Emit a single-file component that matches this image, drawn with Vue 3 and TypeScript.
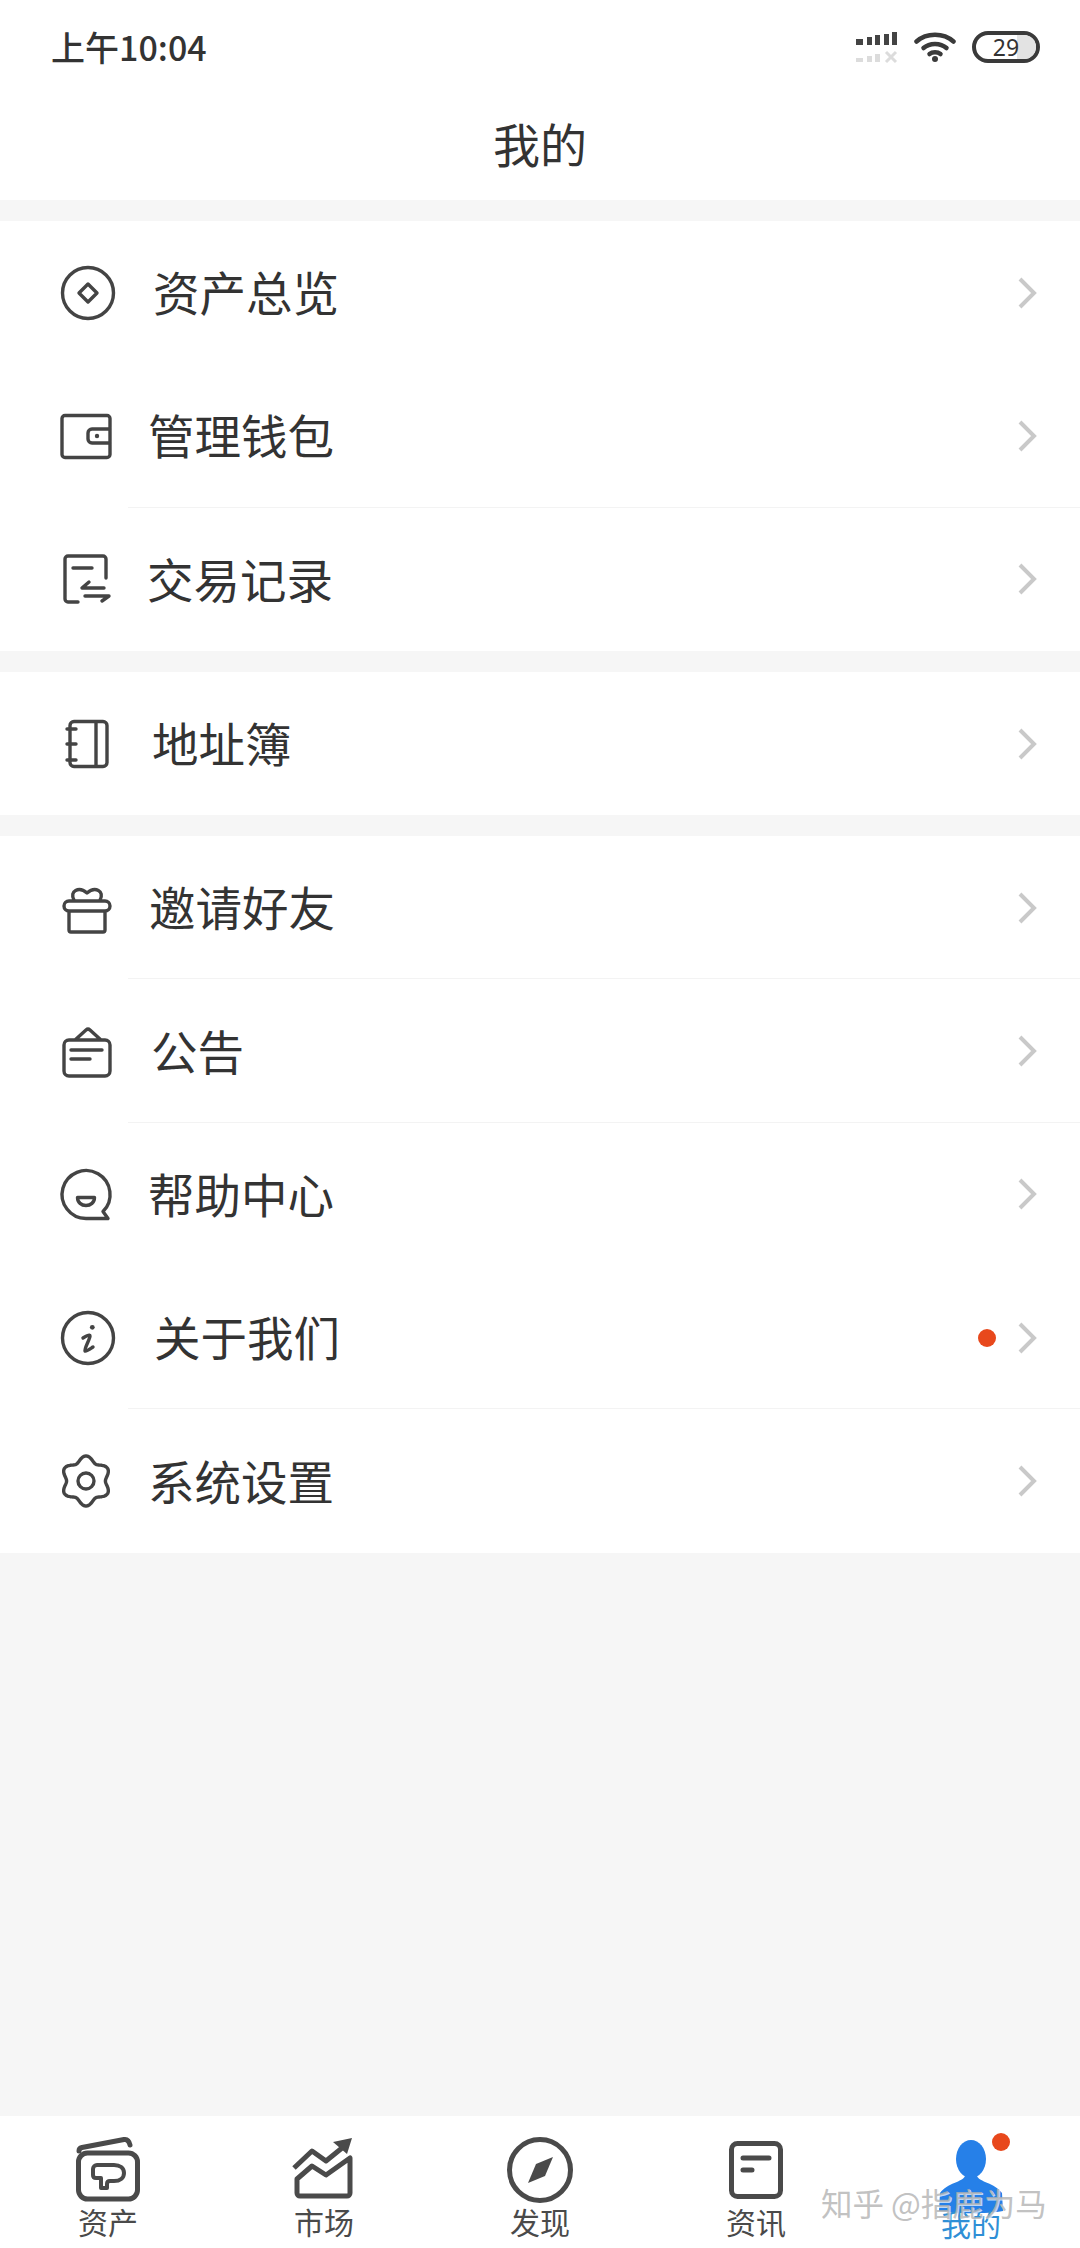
<script setup lang="ts">
interface Row {
  label: string
  d: string
  solid?: string
  gap: number
  line?: boolean
  dot?: boolean
}

const circle = (cx: number, cy: number, r: number): string =>
  `M${cx - r} ${cy}a${r} ${r} 0 1 0 ${2 * r} 0a${r} ${r} 0 1 0 ${-2 * r} 0z`

const gear = (cx: number, cy: number): string => {
  const pts: string[] = []
  for (let i = 0; i < 120; i++) {
    const t = (i / 120) * Math.PI * 2
    const r = 22.2 + 2.8 * Math.cos(6 * (t - Math.PI / 2))
    pts.push(`${(cx + r * Math.cos(t)).toFixed(2)} ${(cy + r * Math.sin(t)).toFixed(2)}`)
  }
  return `M${pts.join('L')}Z`
}

const sections: Row[][] = [
  [
    { label: '资产总览', gap: 33, d: `${circle(32, 32, 25.5)}M32 23l9 9-9 9-9-9z` },
    {
      label: '管理钱包',
      gap: 28,
      line: true,
      d: 'M9 11.5h42a3 3 0 0 1 3 3v36a3 3 0 0 1-3 3H9a3 3 0 0 1-3-3v-36a3 3 0 0 1 3-3zM54 25H36a4 4 0 0 0-4 4v6a4 4 0 0 0 4 4h18',
      solid: circle(41, 32, 2.2)
    },
    {
      label: '交易记录',
      gap: 27,
      d: 'M50 31V12a3 3 0 0 0-3-3H12a3 3 0 0 0-3 3v40a3 3 0 0 0 3 3h10M17 21h19M48 41H26l7-6M29 49h24l-7 5'
    }
  ],
  [
    {
      label: '地址簿',
      gap: 32,
      d: 'M18 9.5h29a4 4 0 0 1 4 4v37a4 4 0 0 1-4 4H18a4 4 0 0 1-4-4v-37a4 4 0 0 1 4-4zM40 10v44M11 17h9M11 32h9M11 48h9'
    }
  ],
  [
    {
      label: '邀请好友',
      gap: 29,
      line: true,
      d: 'M13 25h36a5 5 0 0 1 0 10H13a5 5 0 0 1 0-10zM13 35v19a2 2 0 0 0 2 2h32a2 2 0 0 0 2-2V35M18 24c-5-9 5-14 13-7 8-7 18-2 13 7'
    },
    {
      label: '公告',
      gap: 31,
      line: true,
      d: 'M13 21h36a5 5 0 0 1 5 5v26a5 5 0 0 1-5 5H13a5 5 0 0 1-5-5V26a5 5 0 0 1 5-5zM19 21l11-10a3 3 0 0 1 4 0l11 10M15 31h31M15 40h19'
    },
    {
      label: '帮助中心',
      gap: 28,
      d: 'M30 56.5A24 24 0 1 1 47 49.5L52 56.5ZM21.5 35.5h17c0 5-4 8-8.5 8s-8.5-3-8.5-8z'
    },
    { label: '关于我们', gap: 34, line: true, dot: true, d: `${circle(32, 32, 25.5)}M27 32c3-2 7-4 7-2 0 3-6 13-5 15 1 1 5-2 8-4`, solid: circle(36.3, 21.3, 2.4) },
    { label: '系统设置', gap: 28, d: `${gear(30, 32)}${circle(30, 32, 8)}` }
  ]
]

const tabs = [
  { label: '资产', key: 'asset' },
  { label: '市场', key: 'market' },
  { label: '发现', key: 'find' },
  { label: '资讯', key: 'news' },
  { label: '我的', key: 'me' }
]
</script>

<template>
  <div class="page">
    <header class="head">
      <div class="status">
        <span class="time">上午10:04</span>
        <div class="status-icons">
          <svg class="signal" width="42" height="32" viewBox="0 0 42 32">
            <g fill="#444">
              <rect x="0" y="7" width="7" height="6" />
              <rect x="11" y="5" width="5" height="8" />
              <rect x="19" y="3" width="5" height="10" />
              <rect x="28" y="2" width="5" height="11" />
              <rect x="36" y="0" width="5" height="13" />
            </g>
            <g fill="#dcdcdc">
              <rect x="0" y="26" width="7" height="4" />
              <rect x="11" y="24" width="5" height="6" />
              <rect x="19" y="22" width="5" height="8" />
            </g>
            <path d="M30 20l10 10M40 20L30 30" stroke="#dcdcdc" stroke-width="3" fill="none" />
          </svg>
          <svg class="wifi" width="42" height="30" viewBox="0 0 42 30">
            <g fill="none" stroke="#3a3a3a" stroke-width="4.5" stroke-linecap="round">
              <path d="M2.5 9.5c10-9 27-9 37 0" />
              <path d="M9.5 16c6-5.500 17-5.500 23 0" />
              <path d="M15.500 22c3-2.500 8-2.500 11 0" />
            </g>
            <circle cx="21" cy="27" r="3" fill="#3a3a3a" />
          </svg>
          <div class="battery">
            <span class="battery-level"></span>
            <span class="battery-num">29</span>
          </div>
        </div>
      </div>
      <h1 class="title">我的</h1>
    </header>

    <main class="menu">
      <section v-for="(rows, i) in sections" :key="i" class="section">
        <div v-for="row in rows" :key="row.label" class="row" :class="{ line: row.line }">
          <svg class="icon" width="64" height="64" viewBox="0 0 64 64">
            <path :d="row.d" fill="none" stroke="#444" stroke-width="3.4" stroke-linecap="round" stroke-linejoin="round" />
            <path v-if="row.solid" :d="row.solid" fill="#444" />
          </svg>
          <span class="label" :style="{ marginLeft: row.gap + 'px' }">{{ row.label }}</span>
          <span v-if="row.dot" class="dot"></span>
          <svg class="chev" width="20" height="32" viewBox="0 0 20 32">
            <path d="M3 2l14 14L3 30" fill="none" stroke="#c9c9c9" stroke-width="4" />
          </svg>
        </div>
      </section>
    </main>

    <nav class="tabs">
      <div v-for="tab in tabs" :key="tab.key" class="tab" :class="{ on: tab.key === 'me' }">
        <svg class="tab-icon" width="72" height="72" viewBox="0 0 72 72">
          <g v-if="tab.key === 'asset'" fill="none" stroke="#4a4a4a" stroke-width="5" stroke-linecap="round" stroke-linejoin="round">
            <rect x="6.500" y="20" width="59" height="46" rx="9" />
            <path d="M7 18c0-2 1-3 3-3.500L52 6.500c3-.5 5 1 6 5.500" />
            <path stroke-width="4" d="M25 32H42c6 0 10 3 10 8s-4 8-10 8H38c-2 0-3 1-3 3v4H29V45H24c-2 0-3-1-3-3v-6c0-2 2-4 4-4z" />
          </g>
          <g v-else-if="tab.key === 'market'" fill="none" stroke="#4a4a4a" stroke-width="5" stroke-linejoin="round">
            <path d="M6 35L24 18L38 28L54 15" />
            <path d="M64 5L45 9L59 21Z" fill="#4a4a4a" stroke="none" />
            <path d="M9 46L24 33L38 42L62 25V60a3 3 0 0 1-3 3H12a3 3 0 0 1-3-3Z" />
          </g>
          <g v-else-if="tab.key === 'find'">
            <circle cx="36" cy="37" r="30.500" fill="none" stroke="#4a4a4a" stroke-width="5" />
            <path d="M49 24L41 43L24 50L32 31Z" fill="#4a4a4a" />
          </g>
          <g v-else-if="tab.key === 'news'" fill="none" stroke="#4a4a4a" stroke-width="5" stroke-linecap="round">
            <rect x="11.500" y="10.500" width="49" height="53" rx="6" />
            <path d="M23 25h26M23 37h9" />
          </g>
          <g v-else fill="#2680e8">
            <ellipse cx="36" cy="26" rx="15" ry="19" />
            <path d="M30 40v3C28 49 12 50 5 60L4 78c14 3 50 3 64 0L67 60C60 50 44 49 42 43v-3Z" />
          </g>
        </svg>
        <span class="tab-label">{{ tab.label }}</span>
        <span v-if="tab.key === 'me'" class="tab-dot"></span>
      </div>
      <span class="mark">知乎 @指鹿为马</span>
    </nav>
  </div>
</template>

<style scoped>
.page {
  width: 1080px;
  height: 2248px;
  display: flex;
  flex-direction: column;
  background: #f6f6f6;
  color: #333;
  font-family: "Noto Sans CJK SC", "Noto Sans", sans-serif;
  overflow: hidden;
}
.head {
  height: 200px;
  background: #fff;
  flex: none;
}
.status {
  height: 94px;
  display: flex;
  align-items: center;
  justify-content: space-between;
  padding: 0 40px 0 51px;
}
.time {
  font-size: 34px;
  font-weight: 500;
  line-height: 40px;
  color: #333;
}
.status-icons {
  display: flex;
  align-items: center;
  gap: 16px;
}
.signal {
  margin-top: 2px;
}
.battery {
  position: relative;
  width: 68px;
  height: 32px;
  box-sizing: border-box;
  border: 4px solid #3a3a3a;
  border-radius: 16px;
  display: flex;
  align-items: center;
  justify-content: center;
}
.battery-level {
  position: absolute;
  top: 0;
  right: 0;
  bottom: 0;
  width: 19px;
  border-radius: 0 12px 12px 0;
  background: #e3e3e3;
}
.battery-num {
  position: relative;
  font-size: 23px;
  line-height: 24px;
  font-family: "Noto Sans", sans-serif;
  color: #333;
}
.title {
  margin: 0;
  height: 96px;
  display: flex;
  align-items: center;
  justify-content: center;
  font-size: 47px;
  font-weight: 400;
  color: #333;
}
.menu {
  flex: 1;
  display: flex;
  flex-direction: column;
  gap: 21px;
  padding-top: 21px;
}
.section {
  background: #fff;
}
.row {
  position: relative;
  height: 143.300px;
  display: flex;
  align-items: center;
  padding: 0 43px 0 56px;
}
.row.line::after {
  content: "";
  position: absolute;
  left: 128px;
  right: 0;
  bottom: 0;
  height: 1px;
  background: #f3f3f3;
}
.icon {
  flex: none;
}
.label {
  flex: 1;
  font-size: 46.500px;
  line-height: 60px;
  color: #333;
  padding-bottom: 3px;
}
.dot {
  width: 18px;
  height: 18px;
  margin-right: 21px;
  border-radius: 50%;
  background: #e8481c;
}
.chev {
  flex: none;
}
.tabs {
  position: relative;
  height: 132px;
  flex: none;
  background: #fff;
  display: flex;
  padding-top: 17px;
  box-sizing: border-box;
}
.tab {
  position: relative;
  flex: 1;
  display: flex;
  flex-direction: column;
  align-items: center;
}
.tab-icon {
  flex: none;
  overflow: visible;
}
.tab-label {
  margin-top: -2px;
  font-size: 30px;
  line-height: 36px;
  color: #4a4a4a;
}
.tab.on {
  left: -1px;
}
.tab.on .tab-label {
  position: relative;
  margin-top: 0;
  color: #2f8fd6;
}
.tab-dot {
  position: absolute;
  left: 129px;
  top: 0;
  width: 18px;
  height: 18px;
  border-radius: 50%;
  background: #e8481c;
}
.mark {
  position: absolute;
  left: 821px;
  top: 66px;
  font-size: 31.500px;
  line-height: 40px;
  white-space: nowrap;
  color: rgba(178, 178, 178, 0.8);
  text-shadow: 1px 1px 0 rgba(255, 255, 255, 0.7);
}
</style>
